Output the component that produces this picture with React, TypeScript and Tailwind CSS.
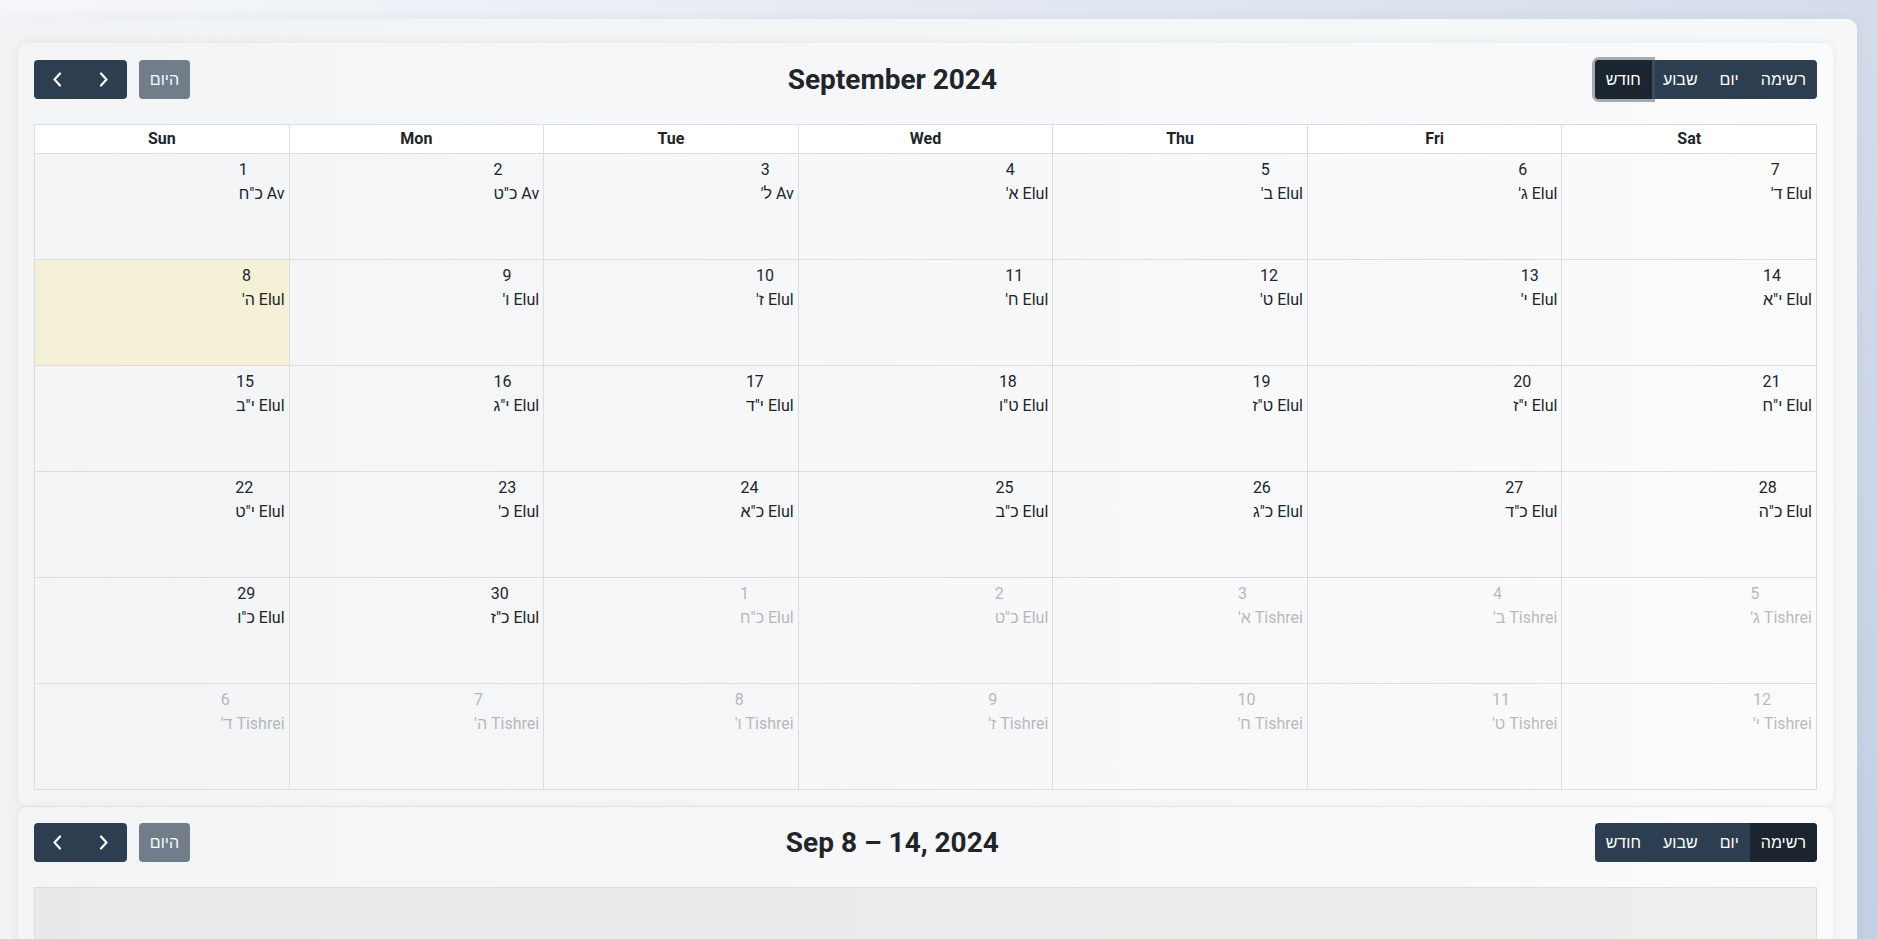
import React from 'react';

type Day = { n: number; heb: string; month: string; other?: boolean; today?: boolean };

const weekdays = ['Sun', 'Mon', 'Tue', 'Wed', 'Thu', 'Fri', 'Sat'];

// September 2024 grid with Hebrew dates
const weeks: Day[][] = [
  [
    { n: 1, heb: 'כ"ח', month: 'Av' },
    { n: 2, heb: 'כ"ט', month: 'Av' },
    { n: 3, heb: "ל'", month: 'Av' },
    { n: 4, heb: "א'", month: 'Elul' },
    { n: 5, heb: "ב'", month: 'Elul' },
    { n: 6, heb: "ג'", month: 'Elul' },
    { n: 7, heb: "ד'", month: 'Elul' },
  ],
  [
    { n: 8, heb: "ה'", month: 'Elul', today: true },
    { n: 9, heb: "ו'", month: 'Elul' },
    { n: 10, heb: "ז'", month: 'Elul' },
    { n: 11, heb: "ח'", month: 'Elul' },
    { n: 12, heb: "ט'", month: 'Elul' },
    { n: 13, heb: "י'", month: 'Elul' },
    { n: 14, heb: 'י"א', month: 'Elul' },
  ],
  [
    { n: 15, heb: 'י"ב', month: 'Elul' },
    { n: 16, heb: 'י"ג', month: 'Elul' },
    { n: 17, heb: 'י"ד', month: 'Elul' },
    { n: 18, heb: 'ט"ו', month: 'Elul' },
    { n: 19, heb: 'ט"ז', month: 'Elul' },
    { n: 20, heb: 'י"ז', month: 'Elul' },
    { n: 21, heb: 'י"ח', month: 'Elul' },
  ],
  [
    { n: 22, heb: 'י"ט', month: 'Elul' },
    { n: 23, heb: "כ'", month: 'Elul' },
    { n: 24, heb: 'כ"א', month: 'Elul' },
    { n: 25, heb: 'כ"ב', month: 'Elul' },
    { n: 26, heb: 'כ"ג', month: 'Elul' },
    { n: 27, heb: 'כ"ד', month: 'Elul' },
    { n: 28, heb: 'כ"ה', month: 'Elul' },
  ],
  [
    { n: 29, heb: 'כ"ו', month: 'Elul' },
    { n: 30, heb: 'כ"ז', month: 'Elul' },
    { n: 1, heb: 'כ"ח', month: 'Elul', other: true },
    { n: 2, heb: 'כ"ט', month: 'Elul', other: true },
    { n: 3, heb: "א'", month: 'Tishrei', other: true },
    { n: 4, heb: "ב'", month: 'Tishrei', other: true },
    { n: 5, heb: "ג'", month: 'Tishrei', other: true },
  ],
  [
    { n: 6, heb: "ד'", month: 'Tishrei', other: true },
    { n: 7, heb: "ה'", month: 'Tishrei', other: true },
    { n: 8, heb: "ו'", month: 'Tishrei', other: true },
    { n: 9, heb: "ז'", month: 'Tishrei', other: true },
    { n: 10, heb: "ח'", month: 'Tishrei', other: true },
    { n: 11, heb: "ט'", month: 'Tishrei', other: true },
    { n: 12, heb: "י'", month: 'Tishrei', other: true },
  ],
];

function Chevron({ dir }: { dir: 'left' | 'right' }) {
  return (
    <svg width="10" height="15" viewBox="0 0 10 15" fill="none">
      <polyline
        points={dir === 'left' ? '8,1.5 2.5,7.5 8,13.5' : '2,1.5 7.5,7.5 2,13.5'}
        stroke="white"
        strokeWidth="2.2"
        strokeLinecap="round"
        strokeLinejoin="round"
      />
    </svg>
  );
}

function Toolbar({ title, active }: { title: string; active: string }) {
  const views = ['חודש', 'שבוע', 'יום', 'רשימה'];
  return (
    <div className="flex items-center justify-between h-[39px] mb-[25px]">
      <div className="flex items-center gap-[12px]">
        <div className="flex h-[39px] w-[93px] rounded-[4px] bg-[#2c3e50] overflow-hidden">
          <button className="flex-1 flex items-center justify-center">
            <Chevron dir="left" />
          </button>
          <button className="flex-1 flex items-center justify-center">
            <Chevron dir="right" />
          </button>
        </div>
        <button className="h-[39px] w-[51px] rounded-[4px] bg-[#2c3e50] opacity-65 text-white text-[16px]">
          היום
        </button>
      </div>
      <h2 className="text-[28px] font-bold text-[#212529] leading-none">{title}</h2>
      <div className="flex h-[39px] rounded-[4px] bg-[#2c3e50]">
        {views.map((v, i) => {
          const isActive = v === active;
          return (
            <button
              key={v}
              className={
                'px-[11px] text-[16px] text-white ' +
                (i === 0 ? 'rounded-l-[4px] ' : '') +
                (i === views.length - 1 ? 'rounded-r-[4px] ' : '') +
                (isActive ? 'bg-[#1a252f] ' : '') +
                (isActive && i === 0 ? 'relative z-10 shadow-[0_0_0_3px_rgba(76,91,106,0.5)]' : '')
              }
            >
              {v}
            </button>
          );
        })}
      </div>
    </div>
  );
}

function DayCell({ d }: { d: Day }) {
  return (
    <div
      className={
        'h-[106px] border-r border-b border-[#ddd] flex justify-end pt-[4px] pr-[4px] ' +
        (d.today ? 'bg-[rgba(255,220,40,0.15)]' : '')
      }
    >
      <div className={'text-left text-[16px] leading-[24px] text-[#212529] ' + (d.other ? 'opacity-30' : '')}>
        <div>{d.n}</div>
        <div className="whitespace-nowrap" dir="ltr">
          <bdi dir="rtl">{d.heb}</bdi> {d.month}
        </div>
      </div>
    </div>
  );
}

export default function App() {
  return (
    <div className="h-[939px] overflow-hidden bg-[linear-gradient(135deg,#f5f7fa_0%,#c3cfe2_100%)] pt-[19px] pr-[20px] font-['Roboto','Liberation_Sans',sans-serif]">
      <div className="h-[1000px] rounded-tr-[10px] bg-[linear-gradient(90deg,#f1f2f4,#f7f8f9)] pl-[18px] pr-[24px] pt-[24px] shadow-[0_0_14px_rgba(0,0,0,0.05)]">
        {/* Month view */}
        <div className="rounded-[10px] bg-[linear-gradient(90deg,#f3f4f6,#fbfbfc)] shadow-[0_0_10px_rgba(0,0,0,0.07)] px-4 pt-[17px] pb-4">
          <Toolbar title="September 2024" active="חודש" />
          <div className="grid grid-cols-7 border-l border-t border-[#ddd]">
            {weekdays.map((w) => (
              <div
                key={w}
                className="h-[29px] border-r border-b border-[#ddd] bg-white flex items-center justify-center text-[16px] font-bold text-[#212529]"
              >
                {w}
              </div>
            ))}
            {weeks.flat().map((d, i) => (
              <DayCell key={i} d={d} />
            ))}
          </div>
        </div>

        {/* List view */}
        <div className="mt-[1px] rounded-[10px] bg-[linear-gradient(90deg,#f3f4f6,#fbfbfc)] shadow-[0_0_10px_rgba(0,0,0,0.07)] px-4 pt-[16px] pb-4">
          <Toolbar title="Sep 8 – 14, 2024" active="רשימה" />
          <div className="h-[300px] border border-[#ddd] bg-[rgba(208,208,208,0.3)]" />
        </div>
      </div>
    </div>
  );
}
